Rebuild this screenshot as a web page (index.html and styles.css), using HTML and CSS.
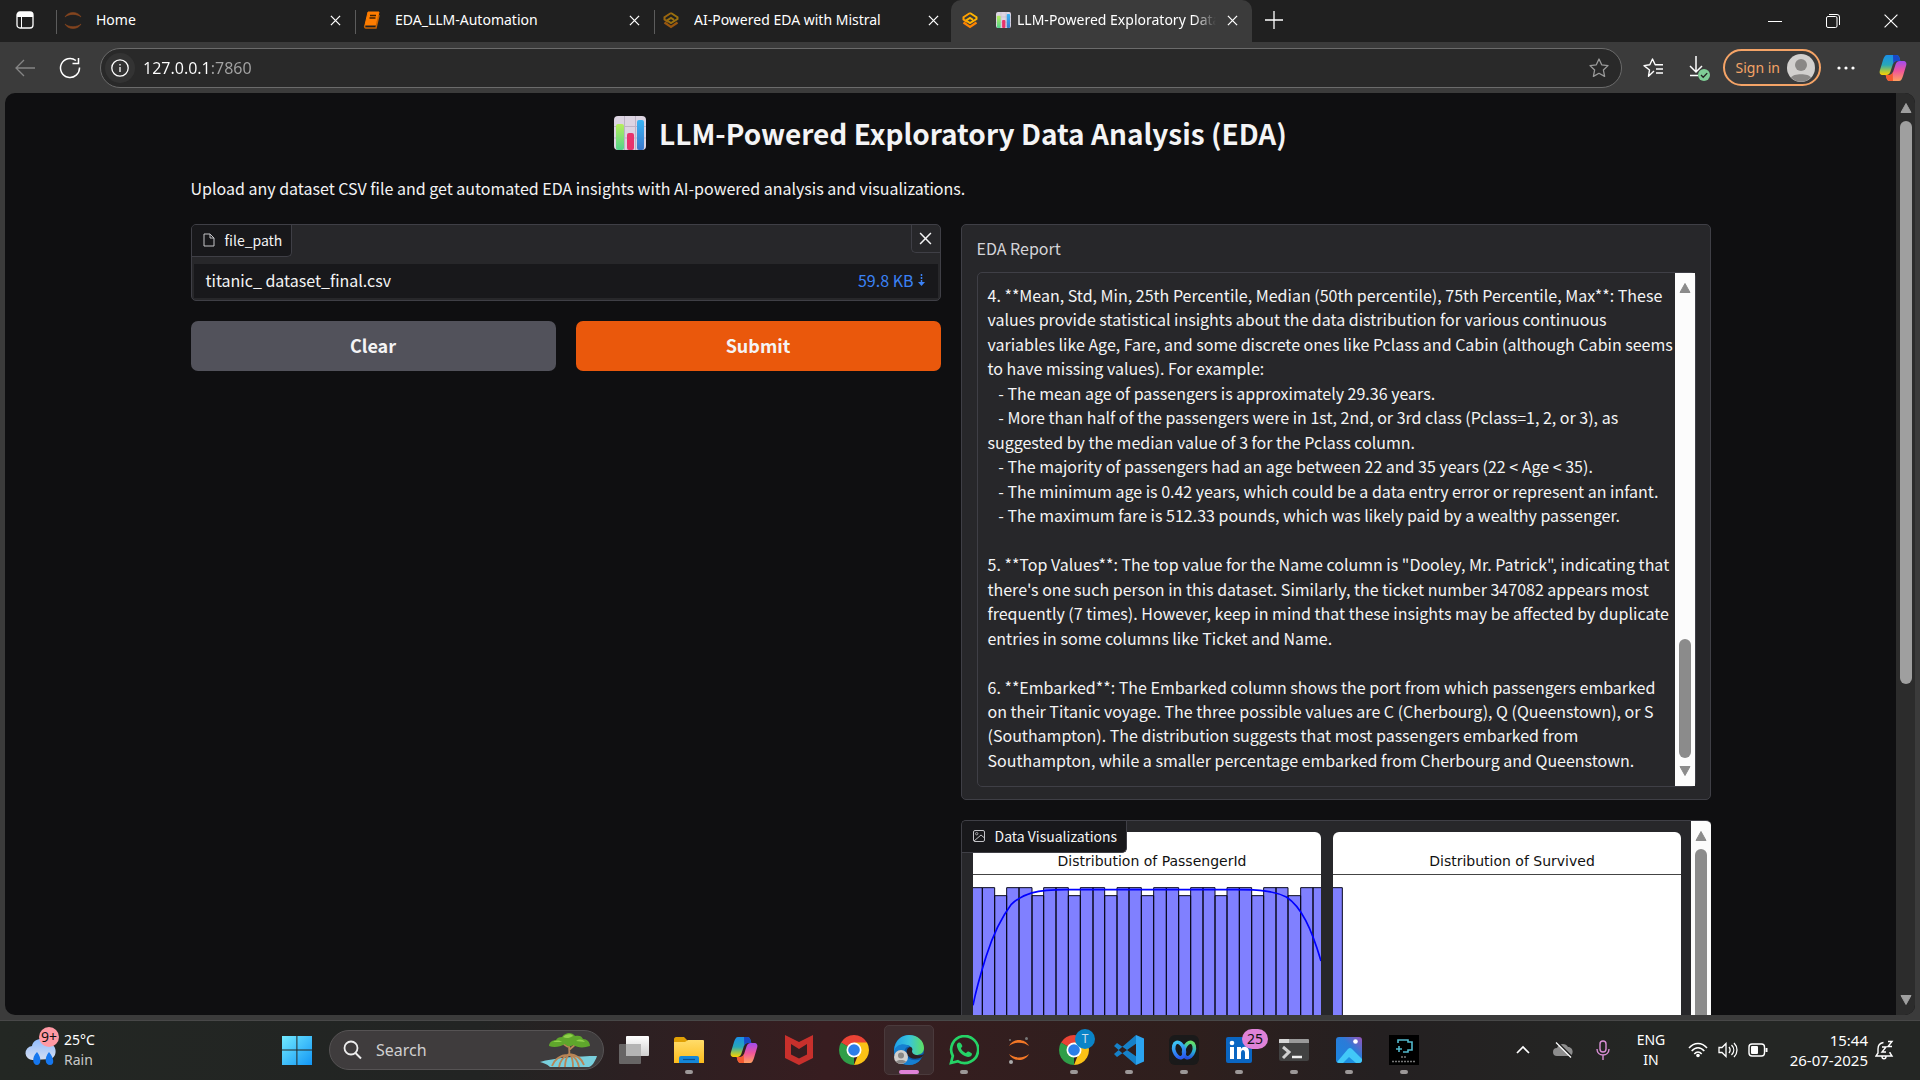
FILE: index.html
```html
<!DOCTYPE html>
<html lang="en">
<head>
<meta charset="utf-8">
<title>LLM-Powered Exploratory Data Analysis (EDA)</title>
<link rel="stylesheet" href="styles.css">
</head>
<body>
<svg class="defs" aria-hidden="true">
  <defs>
    <linearGradient id="g-blue" x1="0" y1="0" x2="0" y2="1"><stop offset="0" stop-color="#1a8fe8"/><stop offset=".5" stop-color="#28a8b8"/><stop offset=".8" stop-color="#a8c840"/><stop offset="1" stop-color="#ffd000"/></linearGradient>
    <linearGradient id="g-pink" x1="0" y1="0" x2="0" y2="1"><stop offset="0" stop-color="#a04cf0"/><stop offset=".5" stop-color="#f0559a"/><stop offset="1" stop-color="#ffa060"/></linearGradient>
    <linearGradient id="g-win" x1="0" y1="0" x2="1" y2="1"><stop offset="0" stop-color="#72eaff"/><stop offset="1" stop-color="#1296f5"/></linearGradient>
    <linearGradient id="g-folder" x1="0" y1="0" x2="0" y2="1"><stop offset="0" stop-color="#ffdc6a"/><stop offset="1" stop-color="#fcbc1c"/></linearGradient>
    <linearGradient id="g-edge1" x1="0" y1="0" x2="1" y2="0"><stop offset="0" stop-color="#1f9fe8"/><stop offset=".5" stop-color="#38c4dc"/><stop offset="1" stop-color="#5fe060"/></linearGradient>
    <linearGradient id="g-cloud" x1="0" y1="0" x2="0" y2="1"><stop offset="0" stop-color="#8fbcff"/><stop offset="1" stop-color="#d6def0"/></linearGradient>
    <linearGradient id="g-photo" x1="0" y1="1" x2="1" y2="0"><stop offset="0" stop-color="#1a86e0"/><stop offset=".6" stop-color="#2b7bd8"/><stop offset="1" stop-color="#9a52b8"/></linearGradient>
    <linearGradient id="g-green" x1="0" y1="0" x2="0" y2="1"><stop offset="0" stop-color="#b6ee5c"/><stop offset="1" stop-color="#52d48c"/></linearGradient>
    <linearGradient id="g-sky" x1="0" y1="0" x2="0" y2="1"><stop offset="0" stop-color="#38b4f4"/><stop offset="1" stop-color="#3c78cc"/></linearGradient>
    <linearGradient id="g-pane" x1="0" y1="0" x2="0" y2="1"><stop offset="0" stop-color="#ffffff"/><stop offset="1" stop-color="#cfcfcf"/></linearGradient>
    <linearGradient id="g-ring1" x1="0" y1="0" x2="0" y2="1"><stop offset="0" stop-color="#3cc4f4"/><stop offset="1" stop-color="#2a5cf0"/></linearGradient>
    <linearGradient id="g-ring2" x1="0" y1="0" x2="0" y2="1"><stop offset="0" stop-color="#62e06a"/><stop offset=".5" stop-color="#28b0d8"/><stop offset="1" stop-color="#2450e0"/></linearGradient>
    <symbol id="i-close" viewBox="0 0 12 12"><path d="M1 1l10 10M11 1L1 11" fill="none" stroke="currentColor" stroke-width="1.4"/></symbol>
    <symbol id="i-up" viewBox="0 0 12 12"><path d="M6 1.500L11 10.500H1z" fill="currentColor" stroke="currentColor" stroke-linejoin="round"/></symbol>
    <symbol id="i-down" viewBox="0 0 12 12"><path d="M6 10.500L11 1.500H1z" fill="currentColor" stroke="currentColor" stroke-linejoin="round"/></symbol>
    <symbol id="i-gradio" viewBox="0 0 18 18"><path d="M9 2L15.500 6.200V8L9 12L5 9.500L9 7L12 8.800" fill="none" stroke="#ffb400" stroke-width="2"/><path d="M9 2L2.500 6.200V8.500L6 10.800" fill="none" stroke="#ffa000" stroke-width="2"/><path d="M2.500 11.500L9 16L15.500 11.500" fill="none" stroke="#ff8400" stroke-width="2.200"/></symbol>
    <symbol id="i-bars" viewBox="0 0 32 34"><rect width="32" height="34" rx="4" fill="#dcd4e2"/><path d="M0 10.500h32M0 22h32M10.500 0v34M21.500 0v34" stroke="#bdb3c6" stroke-width="1"/><rect x="2" y="8" width="8" height="26" rx="2" fill="url(#g-green)"/><rect x="13" y="17" width="7" height="17" rx="2" fill="#e8336c"/><rect x="23" y="4" width="7" height="30" rx="2" fill="url(#g-sky)"/></symbol>
    <symbol id="i-copilot" viewBox="0 0 28 28"><path d="M8 1h9c2 0 3 1 3.500 3l.8 3h-3c-3 0-4 1.500-5 5l-2 6c-.8 2-2 3-4 3H4c-3 0-4-2-3-5l3-10c1-3 2-5 4-5z" fill="url(#g-blue)"/><path d="M14 1h3c2 0 3 1 3.500 3l.8 3h-3c-2 0-3 .6-4 3z" fill="#1848c8"/><path d="M20 27h-9c-2 0-3-1-3.500-3l-.8-3h3c3 0 4-1.500 5-5l2-6c.8-2 2-3 4-3H24c3 0 4 2 3 5l-3 10c-1 3-2 5-4 5z" fill="url(#g-pink)"/><path d="M14 27h-3c-2 0-3-1-3.500-3l-.8-3h3c2 0 3-.6 4-3z" fill="#f45a30"/></symbol>
    <symbol id="i-chrome" viewBox="0 0 30 30"><path d="M15 15L2.010 7.500A15 15 0 0 1 27.990 7.500z" fill="#ea4335"/><path d="M15 15L2.010 7.500A15 15 0 0 0 15 30z" fill="#2f9e48"/><path d="M15 15H21L15 30A15 15 0 0 0 27.990 7.500H15z" fill="#fbc116"/><circle cx="15" cy="15" r="7.500" fill="#fff"/><circle cx="15" cy="15" r="5.800" fill="#2b7de9"/></symbol>
    <symbol id="i-person" viewBox="0 0 28 28"><circle cx="14" cy="14" r="14" fill="#d2d0ce"/><circle cx="14" cy="11" r="6" fill="#8a8886"/><path d="M4 23.500C6 19 22 19 24 23.500A14 14 0 0 1 4 23.500z" fill="#8a8886"/></symbol>
  </defs>
</svg>

<header class="tabstrip">
  <button class="tab-menu" aria-label="Tab actions"><svg width="18" height="18" viewBox="0 0 18 18"><rect x="1" y="1" width="16" height="16" rx="3" fill="none" stroke="#fff" stroke-width="1.300"/><path d="M1 4a3 3 0 0 1 3-3h10a3 3 0 0 1 3 3v2H1z" fill="#fff"/><path d="M5.500 6v11" stroke="#fff"/></svg></button>
  <div class="tab">
    <svg class="favicon" viewBox="0 0 18 18"><path d="M1 6C4 0 14 0 17 6C13 2.500 5 2.500 1 6zM1 13C4 19 14 19 17 13C13 16.500 5 16.500 1 13z" fill="#84451f" stroke="#84451f" stroke-width=".6"/></svg>
    <button class="tab-name">Home</button>
    <button class="tab-close" aria-label="Close tab"><svg width="11" height="11"><use href="#i-close"/></svg></button>
  </div>
  <div class="tab">
    <svg class="favicon" viewBox="0 0 18 18"><path d="M5 1h11l-3 13H2z" fill="#ff7d00" stroke="#ff7d00" stroke-linejoin="round"/><path d="M2 14c-1 2 0 3 1 3h10l3-13" fill="none" stroke="#c96300" stroke-width="1.500"/><path d="M7 4.500h6M6.500 7h6" stroke="#402000" stroke-width="1.300"/></svg>
    <button class="tab-name">EDA_LLM-Automation</button>
    <button class="tab-close" aria-label="Close tab"><svg width="11" height="11"><use href="#i-close"/></svg></button>
  </div>
  <div class="tab">
    <svg class="favicon dim"><use href="#i-gradio"/></svg>
    <button class="tab-name">AI-Powered EDA with Mistral</button>
    <button class="tab-close" aria-label="Close tab"><svg width="11" height="11"><use href="#i-close"/></svg></button>
  </div>
  <div class="tab active">
    <svg class="favicon"><use href="#i-gradio"/></svg>
    <button class="tab-name"><svg width="15" height="16"><use href="#i-bars"/></svg>LLM-Powered Exploratory Data Analysis</button>
    <button class="tab-close" aria-label="Close tab"><svg width="11" height="11"><use href="#i-close"/></svg></button>
  </div>
  <button class="new-tab" aria-label="New tab"><svg width="18" height="18" viewBox="0 0 18 18"><path d="M9 0v18M0 9h18" stroke="#fff" stroke-width="1.300"/></svg></button>
  <div class="window-controls">
    <button aria-label="Minimize"><svg width="14" height="14"><path d="M0 7.500h14" stroke="#fff"/></svg></button>
    <button aria-label="Restore"><svg width="14" height="14"><rect x=".5" y="2.500" width="10.500" height="11" rx="1.500" fill="none" stroke="#fff"/><path d="M3 .5h8a2.500 2.500 0 0 1 2.500 2.500v8" fill="none" stroke="#fff"/></svg></button>
    <button aria-label="Close"><svg width="14" height="14" viewBox="0 0 12 12"><path d="M.5 .5l11 11M11.500 .5L.5 11.500" stroke="#fff" stroke-width="1"/></svg></button>
  </div>
</header>

<nav class="toolbar">
  <button class="tool" aria-label="Back"><svg width="22" height="20" viewBox="0 0 22 20"><path d="M21 10H2M10 2L2 10l8 8" fill="none" stroke="#858585" stroke-width="1.300"/></svg></button>
  <button class="tool" aria-label="Reload"><svg width="22" height="22" viewBox="0 0 22 22"><path d="M20.500 10.500a9.500 9.500 0 1 1-3.600-7M19.500 1v5.500h-6" fill="none" stroke="#fff" stroke-width="1.500"/></svg></button>
  <div class="address">
    <span class="site-info"><svg width="18" height="18" viewBox="0 0 18 18"><circle cx="9" cy="9" r="8.200" fill="none" stroke="#fff" stroke-width="1.300"/><path d="M9 8v5M9 5v1.500" stroke="#fff" stroke-width="1.300"/></svg></span>
    <input class="url" aria-label="Address" value="127.0.0.1:7860">
    <button aria-label="Add to favorites"><svg width="22" height="22" viewBox="0 0 22 22"><path d="M11 2l2.700 5.800 6.300.8-4.600 4.400 1.200 6.400L11 16.300l-5.600 3.100L6.600 13 2 8.600l6.300-.8z" fill="none" stroke="#9a9a9a" stroke-width="1.300" stroke-linejoin="round"/></svg></button>
  </div>
  <button class="tool" aria-label="Favorites"><svg width="22" height="22" viewBox="0 0 22 22"><path d="M12 14l-5.500 5.200L7.500 13 2 8.600l5.800-.8L10.500 2l2.700 5.800H21M14 12h7M14 16h7" fill="none" stroke="#fff" stroke-width="1.400" stroke-linejoin="round"/></svg></button>
  <button class="tool" aria-label="Downloads"><svg width="24" height="26" viewBox="0 0 24 26"><path d="M10 1v16M4 11l6 6 6-6M4 20.500h8" fill="none" stroke="#fff" stroke-width="1.500"/><circle cx="18" cy="20" r="6" fill="#7fce96"/><path d="M15 20l2.200 2.300 4-4.200" fill="none" stroke="#222" stroke-width="1.300"/></svg></button>
  <button class="signin">Sign in<svg width="28" height="28"><use href="#i-person"/></svg></button>
  <button class="tool more" aria-label="Settings and more"><svg width="18" height="4"><circle cx="2" cy="2" r="1.600" fill="#fff"/><circle cx="9" cy="2" r="1.600" fill="#fff"/><circle cx="16" cy="2" r="1.600" fill="#fff"/></svg></button>
  <button class="tool" aria-label="Copilot"><svg width="28" height="28"><use href="#i-copilot"/></svg></button>
</nav>

<div class="viewport">
  <main class="page">
    <div class="app">
      <h1><svg width="32" height="34"><use href="#i-bars"/></svg>LLM-Powered Exploratory Data Analysis (EDA)</h1>
      <p class="intro">Upload any dataset CSV file and get automated EDA insights with AI-powered analysis and visualizations.</p>
      <div class="columns">
        <section class="column">
          <div class="block file">
            <div class="file-head">
              <span class="block-label"><svg width="12" height="14" viewBox="0 0 12 14"><path d="M1 1h6l4 4v8H1zM7 1v4h4" fill="none" stroke="#c4c4c8" stroke-linejoin="round"/></svg>file_path</span>
              <button class="file-clear" aria-label="Clear file"><svg width="13" height="13"><use href="#i-close"/></svg></button>
            </div>
            <div class="file-row"><span>titanic_ dataset_final.csv</span><a href="#">59.8 KB<svg width="9" height="13" viewBox="0 0 9 13"><path d="M4.500 0v8" stroke="#3b82f6" stroke-width="1.500" stroke-dasharray="2 1"/><path d="M1 8l3.500 4L8 8z" fill="#3b82f6"/></svg></a></div>
          </div>
          <div class="actions">
            <button class="btn">Clear</button>
            <button class="btn primary">Submit</button>
          </div>
        </section>
        <section class="column">
          <div class="block report">
            <label for="report">EDA Report</label>
            <div class="textbox">
              <textarea id="report" rows="20" readonly>4. **Mean, Std, Min, 25th Percentile, Median (50th percentile), 75th Percentile, Max**: These values provide statistical insights about the data distribution for various continuous variables like Age, Fare, and some discrete ones like Pclass and Cabin (although Cabin seems to have missing values). For example:
   - The mean age of passengers is approximately 29.36 years.
   - More than half of the passengers were in 1st, 2nd, or 3rd class (Pclass=1, 2, or 3), as suggested by the median value of 3 for the Pclass column.
   - The majority of passengers had an age between 22 and 35 years (22 &lt; Age &lt; 35).
   - The minimum age is 0.42 years, which could be a data entry error or represent an infant.
   - The maximum fare is 512.33 pounds, which was likely paid by a wealthy passenger.

5. **Top Values**: The top value for the Name column is "Dooley, Mr. Patrick", indicating that there's one such person in this dataset. Similarly, the ticket number 347082 appears most frequently (7 times). However, keep in mind that these insights may be affected by duplicate entries in some columns like Ticket and Name.

6. **Embarked**: The Embarked column shows the port from which passengers embarked on their Titanic voyage. The three possible values are C (Cherbourg), Q (Queenstown), or S (Southampton). The distribution suggests that most passengers embarked from Southampton, while a smaller percentage embarked from Cherbourg and Queenstown.</textarea>
              <div class="scrollbar light at-end"><svg width="12" height="12"><use href="#i-up"/></svg><div class="track"><div class="thumb short"></div></div><svg width="12" height="12"><use href="#i-down"/></svg></div>
            </div>
          </div>
          <div class="block gallery">
            <span class="block-label floating"><svg width="12" height="12" viewBox="0 0 12 12"><rect x=".5" y=".5" width="11" height="11" rx="1.500" fill="none" stroke="#c4c4c8"/><circle cx="3.700" cy="3.700" r="1.200" fill="none" stroke="#c4c4c8" stroke-width=".8"/><path d="M1 11L8 5l3.500 3" fill="none" stroke="#c4c4c8"/></svg>Data Visualizations</span>
            <div class="plots">
              <figure>
                <figcaption>Distribution of PassengerId</figcaption>
                <svg class="plot" viewBox="0 0 1044 600">
                  <path fill="#8080ff" stroke="#08081c" stroke-width="3" d="M-9 600V38H28V600zM28 600V38H65V600zM65 600V62H101V600zM101 600V38H138V600zM138 600V38H177V600zM177 600V62H212V600zM212 600V38H249V600zM249 600V38H286V600zM286 600V62H322V600zM322 600V38H360V600zM360 600V38H395V600zM395 600V62H432V600zM432 600V38H468V600zM468 600V38H505V600zM505 600V62H542V600zM542 600V38H580V600zM580 600V38H617V600zM617 600V62H653V600zM653 600V38H690V600zM690 600V38H726V600zM726 600V62H762V600zM762 600V38H799V600zM799 600V38H836V600zM836 600V62H872V600zM872 600V38H909V600zM909 600V38H945V600zM945 600V62H983V600zM983 600V38H1020V600zM1020 600V38H1060V600z"/>
                  <path fill="none" stroke="#0000ff" stroke-width="5" d="M0 391C12 330 25 290 40 242C60 180 85 128 115 88C150 55 190 44 280 44H790C860 44 905 48 940 66C985 95 1015 160 1044 258"/>
                </svg>
              </figure>
              <figure>
                <figcaption>Distribution of Survived</figcaption>
                <svg class="plot" viewBox="0 0 1044 600"><path fill="#8080ff" stroke="#08081c" stroke-width="3" d="M-9 600V38H28V600"/></svg>
              </figure>
            </div>
            <div class="scrollbar light"><svg width="12" height="12"><use href="#i-up"/></svg><div class="track"><div class="thumb full"></div></div></div>
          </div>
        </section>
      </div>
    </div>
  </main>
  <div class="scrollbar"><svg width="12" height="12"><use href="#i-up"/></svg><div class="track"><div class="thumb"></div></div><svg width="12" height="12"><use href="#i-down"/></svg></div>
</div>

<footer class="taskbar">
  <button class="weather">
    <span class="weather-icon"><svg width="36" height="40" viewBox="0 0 36 40"><path d="M8 30a7 7 0 0 1-1-14c1-8 14-10 17-2c8 0 9 12 2 15z" fill="url(#g-cloud)"/><path d="M12 22c5 6 4 13 0 13s-6-7 0-13zM24 22c5 6 6 13 1 13s-6-7-1-13z" fill="#1677ee"/></svg><span class="badge alert">9+</span></span>
    <span class="lines"><span>25°C</span><span class="soft">Rain</span></span>
  </button>
  <div class="apps">
    <button class="task" aria-label="Start"><svg width="30" height="30" viewBox="0 0 30 30"><path d="M0 1h14.400v13.600H0zM15.400 1H30v13.600H15.400zM0 15.600h14.400V30H0zM15.400 15.600H30V30H15.400z" fill="url(#g-win)"/></svg></button>
    <label class="search"><svg width="20" height="20" viewBox="0 0 20 20"><circle cx="8" cy="8" r="6.500" fill="none" stroke="#eee" stroke-width="1.800"/><path d="M12.500 13l5.500 5.500" stroke="#eee" stroke-width="2"/></svg>
      <input type="search" placeholder="Search" aria-label="Search">
      <svg width="60" height="36" viewBox="0 0 60 36"><path d="M1 30C14 26 40 24 58 24C56 30 53 34 50 35H11C8 32 4 31 1 30z" fill="#79cfdc"/><path d="M30 12c0 8 1 9 0 12M30 18l8-7M29 15l-6-4M30 22c-6 3-9 7-10 13M30 22c-3 4-4 8-4 13M31 22c3 4 3 8 3 13M31 22c5 3 8 7 9 13M30 22c8 1 13 5 15 11M29 23c-8 0-14 5-16 11" fill="none" stroke="#b98556" stroke-width="1.800"/><path d="M10 14c0-4 4-6 7-6c1-2 3-3 6-3c2-3 5-4 7-4s5 1 6 3c4-1 7 0 8 3c4 0 7 3 7 7c-6 2-12 2-17-1c-2 2-6 2-8-1c-5 3-11 4-16 2z" fill="#5fa62c"/><path d="M24 5c2-3 9-4 10-1c-3 2-7 3-10 1zM14 10c3-2 7-2 9 0M37 9c3-2 6-2 9 1" fill="#8fd14a"/></svg>
    </label>
    <button class="task" aria-label="Task view"><svg width="30" height="30" viewBox="0 0 30 30"><rect x="7" y="1" width="23" height="20" rx="1" fill="url(#g-pane)"/><rect y="9" width="22" height="20" rx="1" fill="#777" opacity=".8"/><rect x="7" y="9" width="15" height="12" fill="#b4b4b4"/></svg></button>
    <button class="task running" aria-label="File Explorer"><svg width="30" height="30" viewBox="0 0 30 30"><path d="M0 4c0-1 1-2 2-2h8l4 4v4H0z" fill="#e0a005"/><path d="M0 7h11l3-2h15q1 0 1 1v22H0z" fill="url(#g-folder)"/><path d="M5 28v-5q0-2 2-2h16q2 0 2 2v5z" fill="#1487d8"/><path d="M9 24.500h12" stroke="#0b4f8c" stroke-width="1.200"/></svg></button>
    <button class="task" aria-label="Copilot"><svg width="28" height="28"><use href="#i-copilot"/></svg></button>
    <button class="task" aria-label="McAfee"><svg width="28" height="30" viewBox="0 0 28 30"><path d="M0 0l14 7L28 0v23l-14 7L0 23zM6 9v10.500l8 4 8-4V9l-8 5z" fill="#c8302c" fill-rule="evenodd"/></svg></button>
    <button class="task" aria-label="Chrome"><svg width="30" height="30"><use href="#i-chrome"/></svg></button>
    <button class="task running current" aria-label="Edge"><svg width="30" height="30" viewBox="0 0 30 30"><circle cx="15" cy="15" r="15" fill="#0d5cab"/><path d="M0 15C1 5 8 0 15 0C24 0 30 6 30 13C30 18 26 20 22 20C18 20 17 18 18 16C19 13 16 10 12 10C7 10 3 13 0 17z" fill="url(#g-edge1)"/><path d="M0 16C3 8 12 8 16 12C12 11 10 15 11 18C12 24 20 27 27 24C24 28 20 30 15 30C6 30 0 24 0 16z" fill="#167fd0"/><path d="M16 12c-3 1-4 4-3 7c2 5 9 6 15 3l2-3c-3 2-12 2-12-3c1-2 0-4-2-4z" fill="#2d1e20"/><svg y="15" width="14" height="14"><use href="#i-person"/></svg></svg></button>
    <button class="task running" aria-label="WhatsApp"><svg width="30" height="30" viewBox="0 0 30 30"><path d="M2 28l1.800-7A13.500 13.500 0 1 1 9 26.300z" fill="none" stroke="#25d366" stroke-width="2.700"/><path d="M10.500 7.500c-2 0-3 2-2.500 4c1 5 6 10 11 10.500c2 0 4-1 4-3c0-1-3-2.500-4-2.500s-1.500 2-2.500 1.500c-2-1-4-3-4.500-4.500c0-1 1.500-1.500 1.300-2.500c-.3-1-1.300-3.500-2.800-3.500z" fill="#25d366"/></svg></button>
    <button class="task" aria-label="Jupyter"><svg width="22" height="28" viewBox="0 0 22 28"><path d="M1 10C5 2 17 2 21 10C16 5.500 6 5.500 1 10zM1 18C5 26 17 26 21 18C16 22.500 6 22.500 1 18z" fill="#f37726"/><circle cx="18.500" cy="2.500" r="1.500" fill="#777"/><circle cx="3" cy="26" r="2" fill="#aaa"/><circle cx="2" cy="4" r="1" fill="#777"/></svg></button>
    <button class="task running" aria-label="Chrome profile"><svg width="30" height="30"><use href="#i-chrome"/></svg><span class="badge profile">T</span></button>
    <button class="task running" aria-label="Visual Studio Code"><svg width="30" height="30" viewBox="0 0 30 30"><path d="M22 0L0 19l3 3 20-14zM22 30L0 11l3-3 20 14z" fill="#1681c8"/><path d="M22 0l8 3.500v23L22 30z" fill="#2ba4f0"/></svg></button>
    <button class="task running" aria-label="Webex"><svg width="30" height="30" viewBox="0 0 30 30"><rect width="30" height="30" rx="6" fill="#1a1a1a"/><ellipse cx="20" cy="15" rx="5" ry="8" transform="rotate(18 20 15)" fill="none" stroke="url(#g-ring2)" stroke-width="3.600"/><ellipse cx="10" cy="15" rx="5" ry="8" transform="rotate(-18 10 15)" fill="none" stroke="url(#g-ring1)" stroke-width="3.600"/></svg></button>
    <button class="task running" aria-label="LinkedIn"><svg width="26" height="26" viewBox="0 0 26 26"><rect width="26" height="26" rx="2" fill="#0a66c2"/><circle cx="6" cy="6" r="2.300" fill="#fff"/><path d="M4 10h4v12H4zM11 10h4v2c2-3.500 8-3 8 3v7h-4v-6c0-4-4-4-4 0v6h-4z" fill="#fff"/></svg><span class="badge count">25</span></button>
    <button class="task running" aria-label="Terminal"><svg width="30" height="24" viewBox="0 0 30 24"><rect y="1" width="30" height="22" rx="2" fill="#424242"/><path d="M0 5V2q0-1 1-1h28q1 0 1 1v3z" fill="#9a9a9a"/><path d="M0 5V2q0-1 1-1h9v4z" fill="#d6d6d6"/><path d="M4 9l6 5-6 6" fill="none" stroke="#d0d0d0" stroke-width="3"/><path d="M13 19h10" stroke="#eee" stroke-width="2.500"/></svg></button>
    <button class="task running" aria-label="Photos"><svg width="26" height="26" viewBox="0 0 26 26"><rect width="26" height="26" rx="3" fill="url(#g-photo)"/><path d="M1 25L12 12q2-2 4 0l10 10v1q0 3-3 3H3q-1 0-2-1z" fill="#42c8f8"/><path d="M13 20l-6 6h13z" fill="#1c8fe0"/><circle cx="19.500" cy="4.500" r="2.300" fill="#fff"/></svg></button>
    <button class="task running" aria-label="Free Screen Recorder"><svg width="30" height="30" viewBox="0 0 30 30"><rect width="30" height="30" fill="#000"/><path d="M9 8V5h10v2h4v8h-4v2h-5M10 11v6M7 14h6" fill="none" stroke="#52b8cc" stroke-width="1.600"/><path d="M12 22h6M3 26.500h24" stroke="#777" stroke-width="1.500" stroke-dasharray="2 1"/></svg></button>
  </div>
  <div class="tray">
    <button class="tray-btn" aria-label="Hidden icons"><svg width="14" height="10"><path d="M1 8l6-6 6 6" fill="none" stroke="#fff" stroke-width="1.700"/></svg></button>
    <button class="tray-btn" aria-label="OneDrive"><svg width="20" height="18" viewBox="0 0 20 18"><path d="M4 15a4 4 0 0 1 0-8c2-5 9-5 11-1c6 0 6 9 1 9z" fill="#8d8d8d"/><path d="M4 1l14 14" stroke="#242424" stroke-width="2"/><path d="M3 1.500l15 15" stroke="#fff" stroke-width="1.300"/></svg></button>
    <button class="tray-btn" aria-label="Microphone"><svg width="14" height="20" viewBox="0 0 14 20"><rect x="4" y="1" width="6" height="11" rx="3" fill="none" stroke="#d98fd6" stroke-width="1.400"/><path d="M1 9c0 8 12 8 12 0M7 15v5" fill="none" stroke="#d98fd6" stroke-width="1.400"/></svg></button>
    <button class="lines lang"><span>ENG</span><span>IN</span></button>
    <button class="status" aria-label="Network, volume and battery">
      <svg width="20" height="16" viewBox="0 0 20 16"><path d="M1 6C6 0 14 0 19 6M3.700 9C7.500 4.500 12.500 4.500 16.300 9M6.300 12C8.500 9.300 11.500 9.300 13.700 12" fill="none" stroke="#fff" stroke-width="1.500"/><circle cx="10" cy="13.500" r="1.800" fill="#fff"/></svg>
      <svg width="20" height="16" viewBox="0 0 20 16"><path d="M1 5.500h3l4-4v13l-4-4H1zM11 5c1.500 2 1.500 4 0 6M13.500 3c3 3 3 7 0 10M16 1c4 4 4 10 0 14" fill="none" stroke="#fff" stroke-width="1.300"/></svg>
      <svg width="20" height="14" viewBox="0 0 20 14"><rect x="1" y="1" width="15.500" height="12" rx="3" fill="none" stroke="#fff" stroke-width="1.400"/><rect x="3" y="3" width="7" height="8" rx="1" fill="#fff"/><path d="M18.500 5v4" stroke="#fff" stroke-width="2"/></svg>
    </button>
    <button class="lines clock"><span>15:44</span><span>26-07-2025</span></button>
    <button class="tray-btn bell" aria-label="Notifications"><svg width="20" height="20" viewBox="0 0 20 20"><path d="M8.500 2.500C5 3 3 5.500 3 9v4l-2 3h16l-2-3v-1M7 16.500c0 3 4 3 4 0M7 7h4l-4 5h4M13 1.500h4l-4 5h4" fill="none" stroke="#fff" stroke-width="1.400"/></svg></button>
  </div>
</footer>
</body>
</html>
```
FILE: styles.css
```css
* { box-sizing: border-box; }

body {
  margin: 0;
  height: 100vh;
  display: flex;
  flex-direction: column;
  overflow: hidden;
  background: #3b3b3b;
  color: #fff;
  font: 14px/20px "Noto Sans", "Open Sans", sans-serif;
}

button, input, textarea { font: inherit; color: inherit; }
button { border: 0; padding: 0; background: none; white-space: nowrap; }
svg { display: block; flex: none; }
.defs { position: absolute; width: 0; height: 0; }

/* Tab strip */
.tabstrip { display: flex; height: 42px; background: #202020; }
.tab-menu { width: 56px; display: flex; align-items: center; padding: 0 0 2px 16px; }
.tab {
  flex: 0 1 299px;
  min-width: 0;
  display: flex;
  align-items: center;
  gap: 14px;
  padding: 0 10px 2px 8px;
  background: linear-gradient(#5c5c5c, #5c5c5c) 0 10px / 1px 24px no-repeat;
}
.tab.active { flex-basis: 301px; margin-left: -2px; padding-left: 10px; background: #3b3b3b; border-radius: 10px 10px 0 0; }
.favicon { width: 18px; height: 18px; }
.dim { opacity: 0.55; }
.tab-name {
  flex: 1;
  min-width: 0;
  height: 24px;
  overflow: hidden;
  text-align: left;
  display: flex;
  align-items: center;
  gap: 6px;
}
.active .tab-name {
  padding-left: 3px;
  margin-right: -8px;
  -webkit-mask-image: linear-gradient(90deg, #000 90%, transparent);
  mask-image: linear-gradient(90deg, #000 90%, transparent);
}
.tab-close { width: 20px; display: flex; justify-content: center; }
.new-tab { width: 44px; display: flex; align-items: center; justify-content: center; padding-bottom: 2px; }
.window-controls { display: flex; margin-left: auto; }
.window-controls button { width: 58px; display: flex; align-items: center; justify-content: center; }

/* Toolbar */
.toolbar { display: flex; align-items: center; height: 51px; padding: 0 5px 0 2px; }
.tool { width: 45px; height: 36px; display: flex; align-items: center; justify-content: center; }
.tool.more { width: 49px; }
.address {
  flex: 1;
  height: 40px;
  display: flex;
  align-items: center;
  margin: 0 9px 0 8px;
  padding: 0 11px 0 4px;
  border: 1px solid #6b6b6b;
  border-radius: 20px;
  background: #292929;
}
.site-info { width: 30px; height: 30px; border-radius: 15px; background: #333; display: flex; align-items: center; justify-content: center; }
.url {
  flex: 1;
  border: 0;
  outline: 0;
  padding: 0 0 0 8px;
  font-size: 16px;
  background: linear-gradient(90deg, #fff 73px, #a4a4a4 73px);
  -webkit-background-clip: text;
  background-clip: text;
  color: transparent;
}
.signin {
  height: 37px;
  display: flex;
  align-items: center;
  gap: 7px;
  margin-left: 2px;
  padding: 0 4px 0 11px;
  border: 2px solid #f5a467;
  border-radius: 19px;
  color: #f5a467;
}

/* Page viewport */
.viewport {
  flex: 1;
  min-height: 0;
  display: flex;
  margin: 0 5px 5px;
  border-radius: 10px;
  overflow: hidden;
  background: #0f0f11;
}
.page {
  flex: 1;
  min-width: 0;
  overflow: hidden;
  font: 16px/24px "Noto Sans CJK JP", "Noto Sans CJK SC", sans-serif;
  color: #f4f4f5;
}
.app { max-width: 1520px; margin: 0 auto; padding-top: 20px; }
h1 {
  margin: 0;
  display: flex;
  align-items: center;
  justify-content: center;
  gap: 13px;
  font-size: 28px;
  line-height: 40px;
  font-weight: 700;
}
.intro { margin: 23px 0 24px; }
.columns { display: grid; grid-template-columns: 1fr 1fr; gap: 20px; }
.column { display: flex; flex-direction: column; gap: 20px; min-width: 0; }

.block {
  border: 1px solid #3f3f46;
  border-radius: 5px;
  background: #27272a;
  overflow: hidden;
}
.block-label {
  display: flex;
  align-items: center;
  gap: 10px;
  height: 32px;
  padding: 0 9px 2px 11px;
  border: 1px solid #3f3f46;
  border-width: 0 1px 1px 0;
  border-radius: 0 0 5px 0;
  background: #18181b;
  font-size: 14px;
}
.file { padding-bottom: 2px; }
.file-head { display: flex; justify-content: space-between; align-items: flex-start; margin-bottom: 7px; }
.file-clear {
  width: 29px;
  height: 28px;
  display: flex;
  align-items: center;
  justify-content: center;
  border: 1px solid #3f3f46;
  border-width: 0 0 1px 1px;
  border-radius: 0 0 0 5px;
}
.file-row {
  display: flex;
  justify-content: space-between;
  align-items: center;
  height: 34px;
  margin: 0 2px;
  padding: 0 12px 2px;
  background: #18181b;
}
.file-row a { display: flex; align-items: center; gap: 3px; color: #3b82f6; text-decoration: none; }
.actions { display: grid; grid-template-columns: 1fr 1fr; gap: 20px; }
.btn { height: 50px; padding-bottom: 2px; border-radius: 7px; background: #52525b; font-size: 18px; font-weight: 700; }
.btn.primary { background: #ea580c; }

.report { padding: 11px 14px 12px 15px; }
.report label { display: block; margin-bottom: 12px; color: #d4d4d8; }
.textbox { display: flex; border: 1px solid #3f3f46; border-radius: 5px; height: 515px; }
.textbox textarea {
  flex: 1;
  min-width: 0;
  border: 0;
  outline: 0;
  resize: none;
  overflow: hidden;
  padding: 10px 0 0 10px;
  background: none;
  line-height: 1.53;
}

/* Scrollbars */
.scrollbar {
  flex: 0 0 19px;
  display: flex;
  flex-direction: column;
  align-items: center;
  gap: 7px;
  padding: 9px 0;
  background: #2c2c2c;
  color: #9f9f9f;
}
.scrollbar.light { flex-basis: 20px; background: #fcfcfc; color: #8b8b8b; }
.track { flex: 1; min-height: 0; display: flex; flex-direction: column; }
.at-end .track { justify-content: flex-end; }
.thumb { width: 12px; height: 65%; border-radius: 6px; background: #9f9f9f; }
.light .thumb { background: #8b8b8b; }
.thumb.short { height: 26%; }
.thumb.full { height: 100%; }

.gallery { position: relative; display: flex; height: 600px; border-right: 0; }
.floating { position: absolute; left: 0; top: 0; }
.plots { flex: 1; min-width: 0; display: grid; grid-template-columns: 1fr 1fr; gap: 12px; padding: 11px 10px 10px 11px; }
.plots figure {
  margin: 0;
  height: 440px;
  overflow: hidden;
  border-radius: 6px;
  background: #fff;
}
figcaption {
  height: 43px;
  padding: 17px 0 0 11px;
  border-bottom: 1px solid #444;
  color: #111;
  font: 14px/24px "DejaVu Sans", sans-serif;
  text-align: center;
}
.plot { width: 100%; }

/* Taskbar */
.taskbar {
  height: 60px;
  display: flex;
  align-items: center;
  padding-bottom: 2px;
  border-top: 1px solid #484848;
  background: linear-gradient(90deg, #232723 0, #222423 25%, #2c2022 33%, #371d20 43%, #2e1f1d 62%, #242021 72%, #242624 85%);
}
.weather { width: 272px; display: flex; align-items: center; gap: 3px; padding-left: 25px; text-align: left; }
.weather-icon, .task { position: relative; }
.lines { display: flex; flex-direction: column; }
.soft { color: #c8c8c8; }
.badge {
  position: absolute;
  height: 20px;
  min-width: 20px;
  border-radius: 10px;
  text-align: center;
  color: #111;
}
.alert { top: -3px; right: 2px; background: #ff99a4; }
.profile { top: 4px; right: 4px; background: #0a84c8; color: #cde; font-size: 12px; }
.count { top: 4px; right: -4px; width: 26px; background: #df82d8; }
.apps { display: flex; align-items: center; gap: 5px; }
.task {
  width: 50px;
  height: 50px;
  display: flex;
  align-items: center;
  justify-content: center;
  border-radius: 5px;
}
.running::after {
  content: "";
  position: absolute;
  left: 21px;
  bottom: 1px;
  width: 8px;
  height: 4px;
  border-radius: 2px;
  background: #9c9898;
}
.current { background: #3d2c2e; border: 1px solid #4a3a3c; }
.current::after { left: 14px; bottom: 0; width: 20px; background: #df82d8; }
.search {
  width: 275px;
  height: 40px;
  display: flex;
  align-items: center;
  gap: 13px;
  margin-left: 2px;
  padding: 0 4px 0 13px;
  border: 1px solid #565354;
  border-radius: 20px;
  background: #3f3c3d;
}
.search input { flex: 1; min-width: 0; padding: 0; border: 0; outline: 0; background: none; font-size: 16px; }
.search input::placeholder { color: #d0d0d0; opacity: 1; }
.tray { display: flex; align-items: center; margin-left: auto; padding-right: 18px; }
.tray-btn { width: 40px; display: flex; align-items: center; justify-content: center; }
.lines.lang { width: 56px; align-items: center; }
.status { display: flex; align-items: center; gap: 10px; padding: 0 9px; }
.clock { width: 91px; align-items: flex-end; font-size: 15px; }
.tray-btn.bell { width: 34px; }
```
